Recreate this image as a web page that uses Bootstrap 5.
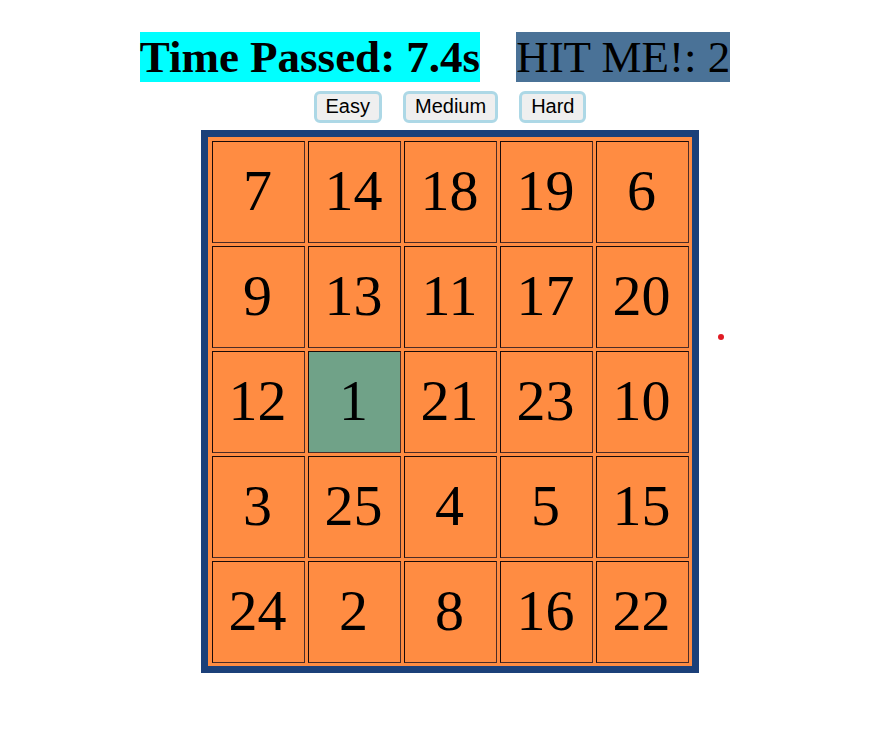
<!DOCTYPE html>
<html lang="en">
<head>
<meta charset="utf-8">
<meta name="viewport" content="width=device-width, initial-scale=1">
<title>Hit Me</title>
<link href="https://cdn.jsdelivr.net/npm/bootstrap@5.3.0/dist/css/bootstrap.min.css" rel="stylesheet">
<style>
body { font-family: "Liberation Serif", "Times New Roman", serif; color: #000; background: #fff; }
.game { padding: 32px 0 32px 11px; }
.scores { gap: 36px; padding-right: 30px; font-size: 45px; line-height: 50px; }
.timer { background: #0ff; }
.target { background: #4a7297; }
.levels { gap: 21px; margin: 9px 0 7px; }
.level { font: 20px/24px "Liberation Sans", Arial, sans-serif; color: #000; background: #efefef; border: 3px solid #add8e6; border-radius: 6px; padding: 0 9px 2px; }
.board { border-collapse: separate; border-spacing: 3px; border: 7px solid #1b4079; padding: 1px 0 0 1px; background: #ff8c42; }
.board td { width: 93px; height: 102px; padding: 0 2px 2px 0; border: 1px solid; border-color: #1a0a08 #4d2c26 #4d2c26 #1a0a08; font-size: 58px; line-height: 66px; text-align: center; vertical-align: middle; }
.board .hit { background: #70a288; }
.marker { left: 100%; top: 204px; margin-left: 19px; width: 6px; height: 6px; background: #e01b24; }
</style>
</head>
<body>
<main class="game d-flex flex-column align-items-center">
  <header class="scores d-flex flex-wrap justify-content-center">
    <div class="timer fw-bold">Time Passed: 7.4s</div>
    <div class="target">HIT ME!: 2</div>
  </header>
  <div class="levels d-flex">
    <button type="button" class="level">Easy</button>
    <button type="button" class="level">Medium</button>
    <button type="button" class="level">Hard</button>
  </div>
  <div class="position-relative">
    <table class="board">
      <tbody>
        <tr><td>7</td><td>14</td><td>18</td><td>19</td><td>6</td></tr>
        <tr><td>9</td><td>13</td><td>11</td><td>17</td><td>20</td></tr>
        <tr><td>12</td><td class="hit">1</td><td>21</td><td>23</td><td>10</td></tr>
        <tr><td>3</td><td>25</td><td>4</td><td>5</td><td>15</td></tr>
        <tr><td>24</td><td>2</td><td>8</td><td>16</td><td>22</td></tr>
      </tbody>
    </table>
    <span class="marker position-absolute rounded-circle"></span>
  </div>
</main>
<script src="https://cdn.jsdelivr.net/npm/bootstrap@5.3.0/dist/js/bootstrap.bundle.min.js"></script>
</body>
</html>
